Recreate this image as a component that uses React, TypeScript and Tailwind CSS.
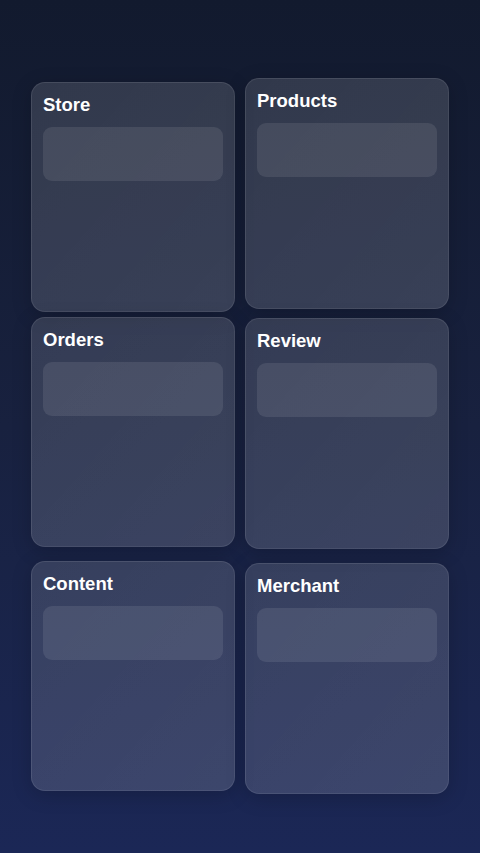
const font = { fontFamily: '"Liberation Sans", Arial, sans-serif' };

type CardProps = { title: string; className?: string };

function Card({ title, className = "" }: CardProps) {
  return (
    <div
      className={`w-[204px] rounded-[14px] border border-white/[0.09] bg-gradient-to-br from-white/[0.13] to-white/[0.15] px-[11px] pt-[12px] shadow-[0_4px_20px_rgba(0,0,0,0.18)] ${className}`}
    >
      <div className="text-[18.5px] font-bold leading-5 text-white">{title}</div>
      <div className="mt-3 h-[54px] rounded-[9px] bg-white/[0.09]" />
    </div>
  );
}

export default function App() {
  return (
    <div
      style={font}
      className="flex h-[853px] w-[480px] justify-center gap-[10px] overflow-hidden bg-gradient-to-b from-[#121a2e] via-[#18213f] to-[#1b2756]"
    >
      <div className="flex flex-col">
        <Card title="Store" className="mt-[82px] h-[230px]" />
        <Card title="Orders" className="mt-[5px] h-[230px]" />
        <Card title="Content" className="mt-[14px] h-[230px]" />
      </div>
      <div className="flex flex-col">
        <Card title="Products" className="mt-[78px] h-[231px]" />
        <Card title="Review" className="mt-[9px] h-[231px]" />
        <Card title="Merchant" className="mt-[14px] h-[231px]" />
      </div>
    </div>
  );
}
